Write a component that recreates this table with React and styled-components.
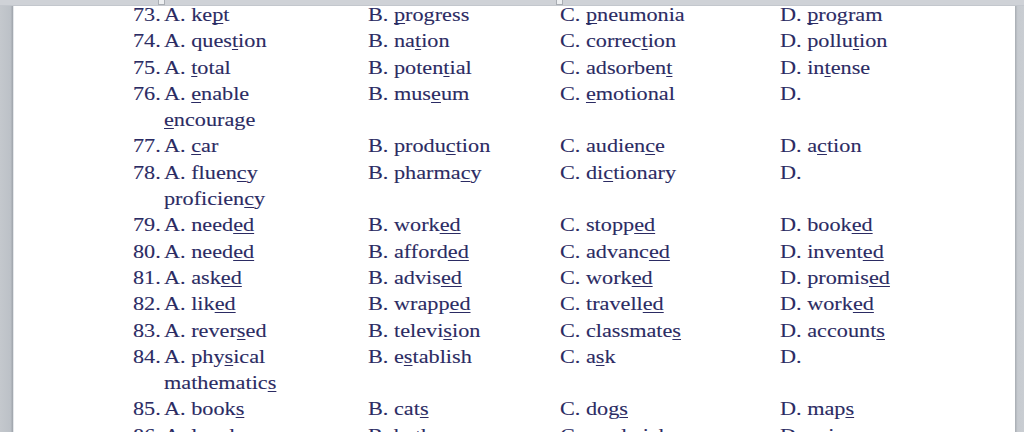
import React from "react";
import styled, { createGlobalStyle } from "styled-components";

const GlobalStyle = createGlobalStyle`
  html, body { margin: 0; padding: 0; background: #ffffff; }
  #root { width: 1024px; height: 432px; overflow: hidden; }
`;

const Window = styled.div`
  display: flex;
  flex-direction: column;
  width: 1024px;
  height: 432px;
  overflow: hidden;
  background: #ffffff;
`;

const TopBar = styled.div`
  flex: 0 0 5px;
  display: flex;
  align-items: flex-start;
  background: #cfd2d7;
  border-bottom: 1px solid #c3c7cd;
  box-sizing: border-box;
`;

const TabMarker = styled.span`
  width: 7px;
  height: 5px;
  margin-left: ${(p) => p.$gap}px;
  background: #eef0f2;
  border: 1px solid #a9adb3;
  border-top: none;
  box-sizing: border-box;
`;

const Body = styled.div`
  flex: 1;
  display: flex;
  min-height: 0;
`;

const LeftRail = styled.div`
  flex: 0 0 13px;
  background: linear-gradient(to right, #c4c8cd 0%, #bcc1c7 80%, #9ea3aa 100%);
  border-right: 1px solid #e4e7ea;
`;

const RightRail = styled.div`
  flex: 0 0 9px;
  background: linear-gradient(to right, #a7acb2 0%, #c7cbd0 30%, #c9cdd2 100%);
`;

const Page = styled.div`
  flex: 1;
  background: #ffffff;
  overflow: hidden;
  padding-left: 118.5px;
`;

const Sheet = styled.div`
  font-family: "Liberation Serif", "Times New Roman", serif;
  font-size: 19px;
  line-height: 18px;
  color: #2b2b63;
  -webkit-text-stroke: 0.1px #2b2b63;
`;

const Row = styled.div`
  display: grid;
  grid-template-columns: 31px 204px 192.2px 220.6px 1fr;
  align-items: start;
  white-space: nowrap;
  height: 26.3px;
`;

const Cell = styled.div`
  overflow: visible;
`;

const Stretch = styled.span`
  display: inline-block;
  transform: scaleX(1.17);
  transform-origin: left center;
`;

const Under = styled.span`
  text-decoration: underline;
  text-decoration-thickness: 1.3px;
  text-underline-offset: 2px;
  text-decoration-skip-ink: none;
`;

function Word({ text }) {
  const parts = text.split(/\[|\]/);
  return (
    <>
      {parts.map((p, i) =>
        i % 2 === 1 ? <Under key={i}>{p}</Under> : <React.Fragment key={i}>{p}</React.Fragment>
      )}
    </>
  );
}

const rows = [
  { n: 73, a: "ke[p]t", b: "[p]rogress", c: "[p]neumonia", d: "[p]rogram" },
  { n: 74, a: "ques[t]ion", b: "na[t]ion", c: "correc[t]ion", d: "pollu[t]ion" },
  { n: 75, a: "[t]otal", b: "poten[t]ial", c: "adsorben[t]", d: "in[t]ense" },
  { n: 76, a: "[e]nable", b: "mus[e]um", c: "[e]motional", wrap: "[e]ncourage" },
  { n: 77, a: "[c]ar", b: "produ[c]tion", c: "audien[c]e", d: "a[c]tion" },
  { n: 78, a: "fluen[c]y", b: "pharma[c]y", c: "di[c]tionary", wrap: "proficien[c]y" },
  { n: 79, a: "need[ed]", b: "work[ed]", c: "stopp[ed]", d: "book[ed]" },
  { n: 80, a: "need[ed]", b: "afford[ed]", c: "advanc[ed]", d: "invent[ed]" },
  { n: 81, a: "ask[ed]", b: "advis[ed]", c: "work[ed]", d: "promis[ed]" },
  { n: 82, a: "lik[ed]", b: "wrapp[ed]", c: "travell[ed]", d: "work[ed]" },
  { n: 83, a: "rever[s]ed", b: "televi[s]ion", c: "classmate[s]", d: "account[s]" },
  { n: 84, a: "phy[s]ical", b: "e[s]tablish", c: "a[s]k", wrap: "mathematic[s]" },
  { n: 85, a: "book[s]", b: "cat[s]", c: "dog[s]", d: "map[s]" },
  { n: 86, a: "laugh[s]", b: "bath[s]", c: "sandwiche[s]", d: "coin[s]" },
];

export default function App() {
  return (
    <>
      <GlobalStyle />
      <Window>
        <TopBar>
          <TabMarker $gap={158} />
          <TabMarker $gap={391} />
        </TopBar>
        <Body>
          <LeftRail />
          <Page>
            <Sheet>
              {rows.map((r) => (
                <React.Fragment key={r.n}>
                  <Row>
                    <Cell>
                      <Stretch>{r.n}.</Stretch>
                    </Cell>
                    <Cell>
                      <Stretch>
                        A. <Word text={r.a} />
                      </Stretch>
                    </Cell>
                    <Cell>
                      <Stretch>
                        B. <Word text={r.b} />
                      </Stretch>
                    </Cell>
                    <Cell>
                      <Stretch>
                        C. <Word text={r.c} />
                      </Stretch>
                    </Cell>
                    <Cell>
                      <Stretch>D. {r.d ? <Word text={r.d} /> : null}</Stretch>
                    </Cell>
                  </Row>
                  {r.wrap ? (
                    <Row>
                      <Cell />
                      <Cell>
                        <Stretch>
                          <Word text={r.wrap} />
                        </Stretch>
                      </Cell>
                    </Row>
                  ) : null}
                </React.Fragment>
              ))}
            </Sheet>
          </Page>
          <RightRail />
        </Body>
      </Window>
    </>
  );
}
